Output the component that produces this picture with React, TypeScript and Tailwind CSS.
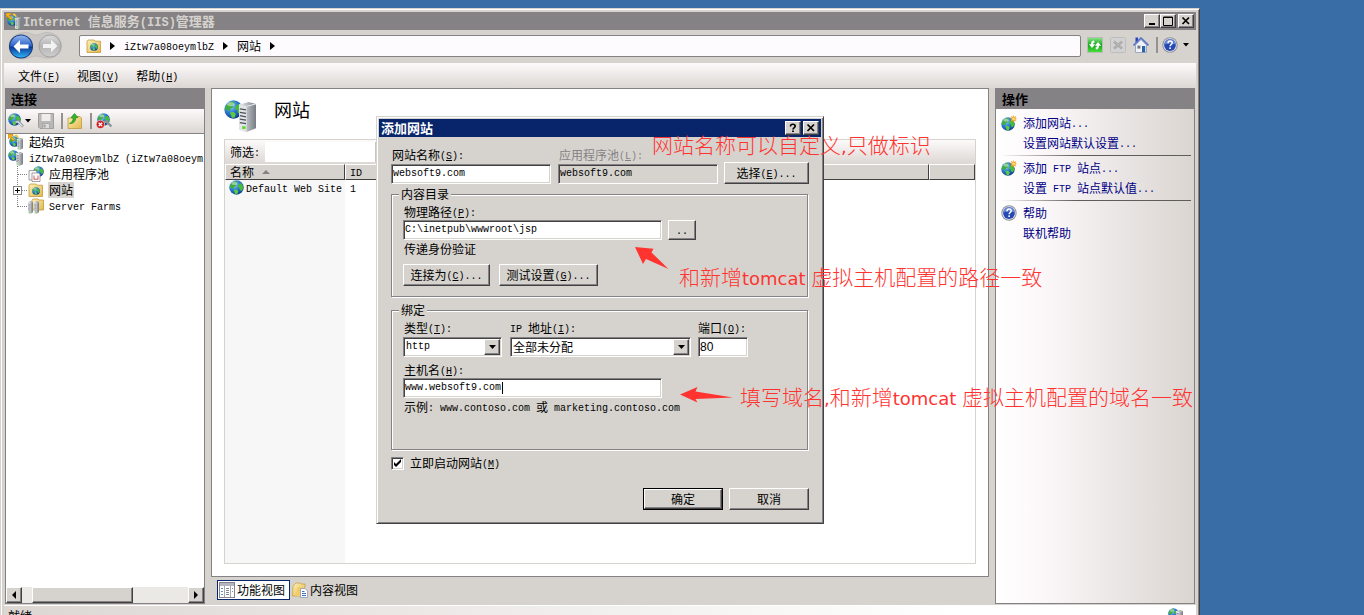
import React from "react";

const RAISED =
  "border border-t-white border-l-white border-r-[#424142] border-b-[#424142] shadow-[inset_-1px_-1px_0_#848284] bg-[#d6d3ce]";
const SUNKEN =
  "border border-t-[#848284] border-l-[#848284] border-r-white border-b-white shadow-[inset_1px_1px_0_#424142,inset_-1px_-1px_0_#d6d3ce]";
const FIELD =
  "h-5 w-full min-w-0 rounded-none pb-[2px] pl-px font-['Liberation_Mono','Noto_Sans_CJK_SC',monospace] text-[10px] leading-4 text-black outline-none";

/* Latin runs are set in a half-width face; "&X" underlines an access key. */
function T({ s, bold }: { s: string; bold?: boolean }) {
  const runs = s.match(/[\x20-\x7e]+|[^\x20-\x7e]+/g) ?? [];
  return (
    <span className="whitespace-pre">
      {runs.map((r, i) => {
        if (!/^[\x20-\x7e]/.test(r)) return <React.Fragment key={i}>{r}</React.Fragment>;
        const m = r.match(/^(.*)&(.)(.*)$/);
        return (
          <span
            key={i}
            className={
              bold
                ? "font-['Liberation_Mono',monospace] text-[12px] leading-none"
                : "align-[1px] font-['Liberation_Mono',monospace] text-[10px] leading-none"
            }
          >
            {m ? (
              <>
                {m[1]}
                <u>{m[2]}</u>
                {m[3]}
              </>
            ) : (
              r
            )}
          </span>
        );
      })}
    </span>
  );
}

function Defs() {
  return (
    <svg width="0" height="0" className="absolute" aria-hidden="true">
      <defs>
        <radialGradient id="sea" cx="0.35" cy="0.3" r="0.8">
          <stop offset="0" stopColor="#9fd4ff" />
          <stop offset="0.45" stopColor="#2f7fd6" />
          <stop offset="1" stopColor="#0b2f86" />
        </radialGradient>
        <linearGradient id="steel" x1="0" x2="1">
          <stop offset="0" stopColor="#f0f1f3" />
          <stop offset="1" stopColor="#777c84" />
        </linearGradient>
        <linearGradient id="manila" x1="0" y1="0" x2="1" y2="1">
          <stop offset="0" stopColor="#fdf0b4" />
          <stop offset="1" stopColor="#e3b84e" />
        </linearGradient>
        <linearGradient id="blueBall" x1="0" y1="0" x2="0" y2="1">
          <stop offset="0" stopColor="#8fb4ee" />
          <stop offset="0.48" stopColor="#2c62c8" />
          <stop offset="0.52" stopColor="#0b3496" />
          <stop offset="1" stopColor="#2fb4f4" />
        </linearGradient>
        <linearGradient id="greyBall" x1="0" y1="0" x2="0" y2="1">
          <stop offset="0" stopColor="#dcdcdc" />
          <stop offset="0.5" stopColor="#b4b4b4" />
          <stop offset="1" stopColor="#cfcfcf" />
        </linearGradient>
        <linearGradient id="green" x1="0" y1="0" x2="0" y2="1">
          <stop offset="0" stopColor="#8fe88a" />
          <stop offset="0.5" stopColor="#12a51a" />
          <stop offset="1" stopColor="#4de23c" />
        </linearGradient>
      </defs>
    </svg>
  );
}

function GlobeShape({ x, y, d }: { x: number; y: number; d: number }) {
  return (
    <svg x={x} y={y} width={d} height={d} viewBox="0 0 16 16">
      <circle cx="8" cy="8" r="7.7" fill="url(#sea)" />
      <path d="M2 4.5C4 1.8 6.5 1 8.2 1.2L9 3 7.4 4.4 7.8 6 5.6 7.2 5 9.4 2.4 8.2 1 9 1 7z" fill="#3fae3a" />
      <path d="M9.6 5.2 12.6 3.2 14.6 5.6 15.4 8.6 13.6 11.6 11.6 11 11.2 8.6 9.2 7.6z" fill="#47bb3c" />
      <path d="M5 10.4 8.2 10 10 12 8.8 15 6.6 15z" fill="#5ccc3f" />
      <ellipse cx="5.8" cy="3.6" rx="3" ry="1.7" fill="#fff" opacity="0.45" />
    </svg>
  );
}

function ServerShape({ x, y, w, h }: { x: number; y: number; w: number; h: number }) {
  return (
    <svg x={x} y={y} width={w} height={h} viewBox="0 0 8 14" preserveAspectRatio="none">
      <path d="M0 1.2 4.6 0 8 0.9V12.2L3.6 14 0 13z" fill="url(#steel)" />
      <path d="M0 1.2 3.6 2V14L0 13z" fill="#e2e4e8" />
      <path d="M3.6 2 8 0.9" stroke="#f6f7f9" strokeWidth="0.4" />
      <path d="M0.4 3.2 3.3 3.7M0.4 4.8 3.3 5.3M0.4 6.4 3.3 6.9M0.4 8 3.3 8.5M0.4 9.6 3.3 10.1" stroke="#4c5159" strokeWidth="0.6" />
      <rect x="1.5" y="11.3" width="1.6" height="1.3" fill="#5fdb2b" />
    </svg>
  );
}

function FolderShape() {
  return (
    <path d="M1 3.5 2 2H8L9 3.2H14.5V14.5H1z" fill="url(#manila)" stroke="#c39a3b" strokeWidth="0.8" />
  );
}

function Svg({ s = 16, children }: { s?: number; children: React.ReactNode }) {
  return (
    <svg width={s} height={s} viewBox={`0 0 ${s} ${s}`} className="shrink-0" aria-hidden="true">
      {children}
    </svg>
  );
}

const IisIcon = () => (
  <Svg>
    <GlobeShape x={1} y={2} d={11} />
    <ServerShape x={9} y={4} w={6} h={12} />
    <path d="M0 0H5V2L3 2.5 7 6 5 7 1.5 3.5 0 5z" fill="#f4ae1d" stroke="#a8690a" strokeWidth="0.4" />
    <path d="M6 1 9 0.6 11 3.5 9.5 4z" fill="#f8c53f" />
  </Svg>
);
const HostIcon = () => (
  <Svg>
    <GlobeShape x={0} y={0} d={11} />
    <ServerShape x={8} y={2} w={7} h={14} />
  </Svg>
);
const PoolsIcon = () => (
  <Svg>
    <GlobeShape x={5} y={0} d={11} />
    <path d="M1 4.5H7.5L9 6V14H1z" fill="#f8f8f8" stroke="#8a8a8a" strokeWidth="0.8" />
    <path d="M4 7H10.5L12 8.5V15.5H4z" fill="#fff" stroke="#8a8a8a" strokeWidth="0.8" />
    <path d="M6 9.5V13.5M10 9.5V13.5M6 13.2H10" stroke="#d04a4a" strokeWidth="0.9" fill="none" />
  </Svg>
);
const SitesIcon = () => (
  <Svg>
    <FolderShape />
    <GlobeShape x={4} y={5} d={8} />
  </Svg>
);
const FarmsIcon = () => (
  <Svg>
    <path d="M4 2.5 5 1H10L11 2H15.5V12H4z" fill="url(#manila)" stroke="#c39a3b" strokeWidth="0.8" />
    <ServerShape x={0} y={3} w={5} h={13} />
    <ServerShape x={6} y={3} w={5} h={13} />
  </Svg>
);
const HelpIcon = () => (
  <Svg>
    <circle cx="8" cy="8" r="7.7" fill="#8f9097" />
    <circle cx="8" cy="8" r="6.7" fill="#e8e9ee" />
    <circle cx="8" cy="8" r="5.9" fill="#2549b4" />
    <path d="M2.4 7.5a5.6 5.6 0 0 1 11.2 0C10 6.2 6 6.2 2.4 7.5z" fill="#7a9ae2" opacity="0.75" />
    <path d="M6 6.2C6 4.6 7 4.1 8.1 4.1S10.2 4.8 10.2 6C10.2 7.5 8.1 7.6 8.1 9.3" fill="none" stroke="#fff" strokeWidth="1.5" />
    <rect x="7.3" y="10.4" width="1.6" height="1.6" fill="#fff" />
  </Svg>
);
const AddSiteIcon = () => (
  <Svg>
    <GlobeShape x={0} y={2} d={14} />
    <path
      d="M12.5 0 13.2 1.9 15.2 1.1 14.4 3.1 16 3.8 14.3 4.6 15.1 6.5 13.2 5.7 12.5 7.4 11.7 5.7 9.8 6.5 10.6 4.6 9 3.8 10.6 3.1 9.8 1.1 11.8 1.9z"
      fill="#f6a51c"
    />
    <circle cx="12.5" cy="3.7" r="1.3" fill="#ffe27a" />
  </Svg>
);
const ConnectIcon = () => (
  <Svg>
    <GlobeShape x={0} y={0} d={13} />
    <path d="M7 9 10 8.4 15 13.5" fill="none" stroke="#8d939b" strokeWidth="2.6" />
    <path d="M7.6 9 10 8.8 14.5 13.2" fill="none" stroke="#e3e6ea" strokeWidth="1.2" />
  </Svg>
);
const DisconnectIcon = () => (
  <Svg>
    <GlobeShape x={1} y={0} d={13} />
    <path d="M8 9 10.5 8.6 15.4 13.5" fill="none" stroke="#8d939b" strokeWidth="2.4" />
    <circle cx="4.4" cy="11.4" r="4.2" fill="#cf2222" stroke="#fff" strokeWidth="0.5" />
    <path d="M2.7 9.7 6.1 13.1M6.1 9.7 2.7 13.1" stroke="#fff" strokeWidth="1.3" />
  </Svg>
);
const SaveIcon = () => (
  <Svg>
    <path d="M0.5 0.5H15.5V15.5H2L0.5 14z" fill="#bab7b7" stroke="#a09d9e" />
    <rect x="3.5" y="1" width="9" height="7" fill="#efecec" />
    <rect x="4.5" y="10.5" width="7" height="5" fill="#dedbdb" stroke="#a09d9e" strokeWidth="0.7" />
    <rect x="5.5" y="11.5" width="2" height="3" fill="#a09d9e" />
  </Svg>
);
const UpFolderIcon = () => (
  <Svg>
    <path d="M1 5H9L10 3.5H13L14.5 5V15.5H1z" fill="url(#manila)" stroke="#c39a3b" strokeWidth="0.8" />
    <path d="M2.5 10.5C5 9.5 6.2 7.4 6.1 4.6H4L7.5 0.5 11 4.6H8.8C8.8 8.2 6.6 11 2.5 10.5z" fill="#35b52c" stroke="#1b7f1b" strokeWidth="0.6" />
  </Svg>
);
const RefreshIcon = () => (
  <Svg>
    <rect x="0.5" y="0.5" width="15" height="15" fill="url(#green)" stroke="#b6bfb4" />
    <path d="M7 3.4C4.8 3.6 4 5 4 7.2H1.8L5 11 8.2 7.2H6.2C6.2 6 6.4 5.6 7.6 5.4z" fill="#fff" />
    <path d="M9 12.6C11.2 12.4 12 11 12 8.8H14.2L11 5 7.8 8.8H9.8C9.8 10 9.6 10.4 8.4 10.6z" fill="#fff" />
  </Svg>
);
const StopIcon = () => (
  <Svg>
    <rect x="0.5" y="0.5" width="15" height="15" rx="1" fill="#d3d2d2" stroke="#bdbcbc" />
    <path d="M4 4.5 12 11.5M12 4.5 4 11.5" stroke="#a5a5a5" strokeWidth="2.4" />
    <path d="M4.3 4.2 11.7 11M11.7 4.2 4.3 11" stroke="#c4c4c4" strokeWidth="0.8" />
  </Svg>
);
const HomeIcon = () => (
  <Svg>
    <rect x="2.5" y="0.5" width="2.6" height="5" fill="#2b45b4" />
    <path d="M2.5 8 8 2.6 13.5 8V15.5H2.5z" fill="#eff2f8" stroke="#8d9bb8" strokeWidth="0.8" />
    <path d="M0.5 8.4 8 1 15.5 8.4" fill="none" stroke="#5675c8" strokeWidth="1.6" />
    <rect x="9" y="9" width="3.2" height="6.2" fill="#2b62a8" />
    <rect x="4.4" y="8.6" width="3" height="3" fill="#6f7884" />
  </Svg>
);
const FeatureViewIcon = () => (
  <Svg>
    <rect x="0.5" y="0.5" width="15" height="15" fill="#fff" stroke="#84828c" />
    <rect x="1" y="1" width="14" height="3" fill="#b7b5c2" />
    <path d="M5.5 4V15M11.5 4V15" stroke="#a7a5ae" />
    <path d="M2 6.5H4M2 9.5H4M2 12.5H4" stroke="#6d86c8" />
    <path d="M7 6.5H10M7 8.5H10M7 10.5H10M7 12.5H10M13 6.5H14M13 9.5H14" stroke="#8a8893" />
  </Svg>
);
const ContentViewIcon = () => (
  <Svg>
    <path d="M1 4 4 1H8L9 2H13V5L10 14H0.5z" fill="url(#manila)" stroke="#c39a3b" strokeWidth="0.7" />
    <path d="M3 14 6 5H9V14z" fill="#f0cd68" />
    <path d="M8.5 6.5H13L15.5 9V15.5H8.5z" fill="#fff" stroke="#8b97b4" strokeWidth="0.8" />
    <path d="M10 9.5H12.5M10 11.5H14M10 13.5H14" stroke="#3f6fc0" />
  </Svg>
);

const Caret = () => (
  <svg width="6" height="4" viewBox="0 0 6 4" className="shrink-0" aria-hidden="true">
    <path d="M0 0H6L3 3.5z" fill="#000" />
  </svg>
);
const Crumb = () => (
  <svg width="5" height="8" viewBox="0 0 5 8" className="shrink-0" aria-hidden="true">
    <path d="M0 0 5 4 0 8z" fill="#000" />
  </svg>
);
const Divider = () => <span className="h-4 w-[2px] shrink-0 bg-[#94918f]" />;

function CaptionButton({ label, children }: { label: string; children: React.ReactNode }) {
  return (
    <button aria-label={label} className={`flex h-[14px] w-4 items-center justify-center ${RAISED}`}>
      <svg width="12" height="10" viewBox="0 0 12 10" aria-hidden="true">
        {children}
      </svg>
    </button>
  );
}
const CloseGlyph = () => <path d="M2.5 1.5 9 8M9 1.5 2.5 8" stroke="#000" strokeWidth="1.7" />;

function TreeRow({
  icon,
  text,
  level,
  selected,
  expander,
}: {
  icon: React.ReactNode;
  text: string;
  level: number;
  selected?: boolean;
  expander?: boolean;
}) {
  return (
    <li className={`flex h-4 items-center ${level ? "pl-[6px]" : "pl-[2px]"}`}>
      {level > 0 && (
        <span className="flex w-4 shrink-0 items-center">
          {expander ? (
            <svg width="16" height="16" viewBox="0 0 16 16" aria-hidden="true">
              <path d="M5.5 0V16M10 8.5H16" stroke="#848284" strokeDasharray="1 1" />
              <rect x="1.5" y="4.5" width="8" height="8" fill="#fff" stroke="#848284" />
              <path d="M3 8.5H8M5.5 6V11" stroke="#000" />
            </svg>
          ) : (
            <svg width="16" height="16" viewBox="0 0 16 16" aria-hidden="true">
              <path d={text === "Server Farms" ? "M5.5 0V9M6 8.5H16" : "M5.5 0V16M6 8.5H16"} stroke="#848284" strokeDasharray="1 1" fill="none" />
            </svg>
          )}
        </span>
      )}
      {icon}
      <span className={`ml-1 px-px leading-4 ${selected ? "bg-[#d6d3ce]" : ""}`}>
        <T s={text} />
      </span>
    </li>
  );
}

function Connections() {
  return (
    <section className="flex w-[200px] shrink-0 flex-col border border-[#848284] bg-white">
      <h2 className="h-5 shrink-0 bg-[#848284] pl-[5px] text-[13px] leading-5 font-bold">连接</h2>
      <div className="flex h-[25px] shrink-0 items-center border-b border-[#848284] bg-linear-to-b from-[#fdfafb] to-[#dcd7d3] pl-[2px]">
        <button aria-label="连接到" className="flex items-center gap-px">
          <ConnectIcon />
          <Caret />
        </button>
        <button aria-label="保存" className="ml-[7px]">
          <SaveIcon />
        </button>
        <span className="ml-[7px] flex items-center gap-1">
          <Divider />
          <button aria-label="向上">
            <UpFolderIcon />
          </button>
        </span>
        <span className="ml-[7px] flex items-center gap-1">
          <Divider />
          <button aria-label="断开">
            <DisconnectIcon />
          </button>
        </span>
      </div>
      <ul className="flex-1 overflow-hidden">
        <TreeRow level={0} icon={<IisIcon />} text="起始页" />
        <TreeRow level={0} icon={<HostIcon />} text="iZtw7a08oeymlbZ (iZtw7a08oeym" />
        <TreeRow level={1} icon={<PoolsIcon />} text="应用程序池" />
        <TreeRow level={1} icon={<SitesIcon />} text="网站" selected expander />
        <TreeRow level={1} icon={<FarmsIcon />} text="Server Farms" />
      </ul>
      <div className="flex h-4 shrink-0 bg-[#ebe9e6]">
        <button aria-label="向左滚动" className={`flex w-4 items-center justify-center ${RAISED}`}>
          <svg width="4" height="8" viewBox="0 0 4 8" aria-hidden="true">
            <path d="M4 0V8L0 4z" />
          </svg>
        </button>
        <div className="flex flex-1 pl-[10px]">
          <div className={`w-[101px] ${RAISED}`} />
        </div>
        <button aria-label="向右滚动" className={`flex w-4 items-center justify-center ${RAISED}`}>
          <svg width="4" height="8" viewBox="0 0 4 8" aria-hidden="true">
            <path d="M0 0V8L4 4z" />
          </svg>
        </button>
      </div>
    </section>
  );
}

function Sites() {
  const th =
    "border border-t-white border-l-white border-r-[#424142] border-b-[#424142] bg-[#d6d3ce] p-0 text-left font-normal";
  return (
    <section className="flex min-w-0 flex-1 flex-col">
      <div className="flex flex-1 flex-col border border-[#848284] bg-white px-3 pt-[10px] pb-3">
        <div className="flex h-10 shrink-0 gap-4">
          <svg width="34" height="34" viewBox="0 0 34 34" aria-hidden="true">
            <GlobeShape x={0} y={1} d={19} />
            <ServerShape x={15} y={3} w={17} h={30} />
          </svg>
          <h1 className="text-[18px] leading-5">网站</h1>
        </div>
        <div className="flex flex-1 flex-col border border-[#d6d3ce]">
          <div className="flex h-6 shrink-0 items-stretch bg-linear-to-b from-[#fdfafb] to-[#dcd7d3]">
            <label htmlFor="filter" className="w-10 pl-[5px] leading-6">
              <T s="筛选:" />
            </label>
            <input id="filter" className="my-[2px] w-[111px] border-r border-[#c8c5c0] bg-white px-1 outline-none" />
          </div>
          <div className="flex flex-1 flex-col bg-linear-to-r from-[#f7f7f7] from-[120px] to-white to-[120px]">
            <table className="w-full table-fixed border-separate border-spacing-0 leading-[14px]">
              <thead>
                <tr>
                  <th className={`w-[120px] ${th}`}>
                    <span className="flex items-center gap-2 pl-1">
                      名称
                      <svg width="8" height="4" viewBox="0 0 8 4" aria-hidden="true">
                        <path d="M0 4 4 0 8 4z" fill="#848284" />
                      </svg>
                    </span>
                  </th>
                  <th className={`w-[40px] ${th}`}>
                    <span className="block pl-1">
                      <T s="ID" />
                    </span>
                  </th>
                  <th className={th} aria-label="状态" />
                  <th className={`w-[46px] ${th}`} aria-label="绑定" />
                </tr>
              </thead>
              <tbody>
                <tr>
                  <td className="p-0">
                    <span className="flex h-4 items-center gap-px pl-1">
                      <Svg>
                        <GlobeShape x={0} y={0} d={15} />
                      </Svg>
                      <T s="Default Web Site" />
                    </span>
                  </td>
                  <td className="p-0">
                    <span className="flex h-4 items-center pl-[5px]">
                      <T s="1" />
                    </span>
                  </td>
                  <td className="p-0" />
                  <td className="p-0" />
                </tr>
              </tbody>
            </table>
          </div>
        </div>
      </div>
      <div className="flex h-[27px] shrink-0 items-start gap-[2px] pt-[3px] pl-[6px]">
        <button className="flex h-5 items-center gap-[2px] border border-[#08246b] bg-white px-px pr-1">
          <FeatureViewIcon />
          功能视图
        </button>
        <button className="flex h-5 items-center gap-[2px]">
          <ContentViewIcon />
          内容视图
        </button>
      </div>
    </section>
  );
}

function ActionGroup({ icon, items }: { icon: React.ReactNode; items: string[] }) {
  return (
    <div>
      {items.map((it, i) => (
        <div key={it} className="flex h-5 items-center gap-[6px] pl-[5px]">
          <span className="w-4 shrink-0">{i === 0 && icon}</span>
          <a href="#action" className="text-[#000084]">
            <T s={it} />
          </a>
        </div>
      ))}
    </div>
  );
}
const Rule = () => <div className="my-[2px] ml-1 mr-[3px] h-px bg-linear-to-r from-transparent to-[#5f5d5c] to-40%" />;

function Actions() {
  return (
    <section className="w-[200px] shrink-0 border border-[#848284] bg-linear-to-r from-white via-[#fbf7f9] via-25% to-[#dad5d0]">
      <h2 className="h-5 bg-[#848284] pl-[6px] text-[13px] leading-5 font-bold">操作</h2>
      <div className="pt-1">
        <ActionGroup icon={<AddSiteIcon />} items={["添加网站...", "设置网站默认设置..."]} />
        <Rule />
        <ActionGroup icon={<AddSiteIcon />} items={["添加 FTP 站点...", "设置 FTP 站点默认值..."]} />
        <Rule />
        <ActionGroup icon={<HelpIcon />} items={["帮助", "联机帮助"]} />
      </div>
    </section>
  );
}

function Btn({ text, cls }: { text: string; cls: string }) {
  return (
    <button className={`h-[22px] leading-4 ${cls} ${RAISED}`}>
      <T s={text} />
    </button>
  );
}

function Drop({ id, value, cls }: { id: string; value: string; cls: string }) {
  return (
    <div className="relative flex">
      <select
        id={id}
        defaultValue={value}
        className={`h-5 w-full appearance-none rounded-none bg-white pl-[2px] leading-4 text-black outline-none ${cls} ${SUNKEN}`}
      >
        <option>{value}</option>
      </select>
      <span className={`pointer-events-none absolute top-[2px] right-[2px] flex h-4 w-4 items-center justify-center ${RAISED}`}>
        <svg width="7" height="4" viewBox="0 0 7 4" aria-hidden="true">
          <path d="M0 0H7L3.5 4z" />
        </svg>
      </span>
    </div>
  );
}

const GROUP = "mr-px border border-[#848284] px-[11px] shadow-[1px_1px_0_#fff,inset_1px_1px_0_#fff]";
const LEGEND = "relative ml-[-4px] bg-[#d6d3ce] px-[2px] leading-3";

function Dialog() {
  return (
    <div
      role="dialog"
      aria-label="添加网站"
      className="absolute top-[116px] left-[376px] w-[448px] border border-t-[#d6d3ce] border-l-[#d6d3ce] border-r-[#424142] border-b-[#424142] bg-[#d6d3ce] p-[2px] shadow-[inset_1px_1px_0_#fff,inset_-1px_-1px_0_#848284]"
    >
      <div className="flex h-[18px] items-center justify-between bg-[#08246b] px-[2px]">
        <span className="text-[13px] leading-4 font-bold text-white">添加网站</span>
        <span className="flex gap-[2px]">
          <CaptionButton label="帮助">
            <path d="M3.5 3.4C3.5 1.6 4.6 1.2 5.8 1.2S8.2 1.8 8.2 3.2 6 4.6 6 6.6" fill="none" stroke="#000" strokeWidth="1.6" />
            <rect x="5.1" y="7.5" width="1.8" height="1.5" />
          </CaptionButton>
          <CaptionButton label="关闭">
            <CloseGlyph />
          </CaptionButton>
        </span>
      </div>
      <form className="px-3 pt-[11px] pb-[11px]" onSubmit={(e) => e.preventDefault()}>
        <div className="flex items-end">
          <div className="mr-[7px] flex flex-1 flex-col gap-[2px]">
            <label htmlFor="site" className="pl-px leading-[14px]">
              <T s="网站名称(&S):" />
            </label>
            <input id="site" defaultValue="websoft9.com" className={`bg-white ${FIELD} ${SUNKEN}`} />
          </div>
          <div className="mr-[6px] flex flex-1 flex-col gap-[2px]">
            <label htmlFor="pool" className="pl-px leading-[14px] text-[#848284]">
              <T s="应用程序池(&L):" />
            </label>
            <input id="pool" readOnly defaultValue="websoft9.com" className={`bg-[#d6d3ce] ${FIELD} ${SUNKEN}`} />
          </div>
          <Btn text="选择(&E)..." cls="w-[85px]" />
        </div>

        <fieldset className={`mt-1 pb-[10px] ${GROUP}`}>
          <legend className={LEGEND}>内容目录</legend>
          <label htmlFor="path" className="block pt-[5px] pl-px leading-[14px]">
            <T s="物理路径(&P):" />
          </label>
          <div className="mt-px flex items-end gap-[6px]">
            <div className="flex w-[259px]">
              <input id="path" defaultValue="C:\inetpub\wwwroot\jsp" className={`bg-white ${FIELD} ${SUNKEN}`} />
            </div>
            <button aria-label="浏览" className={`h-5 w-7 leading-4 ${RAISED}`}>
              <T s=".." />
            </button>
          </div>
          <p className="mt-[2px] pl-px leading-[14px]">传递身份验证</p>
          <div className="mt-2 flex gap-[9px]">
            <Btn text="连接为(&C)..." cls="w-[87px]" />
            <Btn text="测试设置(&G)..." cls="w-[99px]" />
          </div>
        </fieldset>

        <fieldset className={`mt-[7px] pb-[35px] ${GROUP}`}>
          <legend className={LEGEND}>绑定</legend>
          <div className="flex pt-[5px]">
            <div className="mr-2 flex w-[99px] flex-col gap-[2px]">
              <label htmlFor="type" className="pl-px leading-[14px]">
                <T s="类型(&T):" />
              </label>
              <Drop id="type" value="http" cls="font-['Liberation_Mono',monospace] text-[10px]" />
            </div>
            <div className="mr-[7px] flex w-[181px] flex-col gap-[2px]">
              <label htmlFor="ip" className="leading-[14px]">
                <T s="IP 地址(&I):" />
              </label>
              <Drop id="ip" value="全部未分配" cls="text-[12px]" />
            </div>
            <div className="flex w-[50px] flex-col gap-[2px]">
              <label htmlFor="port" className="leading-[14px]">
                <T s="端口(&O):" />
              </label>
              <input
                id="port"
                defaultValue="80"
                className={`h-5 w-full bg-white pl-px font-['Liberation_Sans',sans-serif] text-[12px] leading-4 outline-none ${SUNKEN}`}
              />
            </div>
          </div>
          <label htmlFor="host" className="mt-[6px] block pl-px leading-[14px]">
            <T s="主机名(&H):" />
          </label>
          <div className="mt-px grid w-[259px]">
            <input id="host" defaultValue="www.websoft9.com" className={`col-start-1 row-start-1 bg-white ${FIELD} ${SUNKEN}`} />
            <span className="pointer-events-none col-start-1 row-start-1 ml-[99px] h-3 w-px self-center bg-black" />
          </div>
          <p className="mt-[2px] pl-px leading-[14px]">
            <T s="示例: www.contoso.com 或 marketing.contoso.com" />
          </p>
        </fieldset>

        <label className="mt-[6px] flex h-[14px] items-center gap-[6px]">
          <span className="grid h-[13px] w-[13px]">
            <input
              type="checkbox"
              defaultChecked
              className={`peer col-start-1 row-start-1 h-[13px] w-[13px] appearance-none bg-white ${SUNKEN}`}
            />
            <svg
              width="13"
              height="13"
              viewBox="0 0 13 13"
              className="pointer-events-none invisible col-start-1 row-start-1 peer-checked:visible"
              aria-hidden="true"
            >
              <path d="M3 5V8L5 10 10 5V2L5 7z" />
            </svg>
          </span>
          <T s="立即启动网站(&M)" />
        </label>

        <div className="mt-[18px] flex justify-end gap-[6px]">
          <button className="h-[22px] w-20 border border-black">
            <span className={`flex h-full items-center justify-center ${RAISED}`}>确定</span>
          </button>
          <Btn text="取消" cls="w-20" />
        </div>
      </form>
    </div>
  );
}

const NOTE = "absolute whitespace-pre text-[21px] leading-6 font-light text-[#ff3431]";
const L = ({ children }: { children: string }) => (
  <span className="font-['DejaVu_Sans',sans-serif] text-[18px] leading-none font-normal">{children}</span>
);

export default function App() {
  return (
    <div className="relative h-screen overflow-hidden bg-[#396da5] pt-2 pr-[164px] font-['Noto_Sans_CJK_SC',sans-serif] text-[12px] text-black">
      <Defs />
      <div className="flex h-[calc(100%+11px)] flex-col border border-t-[#d6d3ce] border-r-[#424142] border-b-0 border-l-[#d6d3ce] bg-[#d6d3ce] px-[3px] pt-[3px] shadow-[inset_1px_1px_0_#fff,inset_-1px_0_0_#848284]">
        <header className="flex h-[18px] shrink-0 items-center justify-between bg-[#848284] pr-[2px] pl-[2px]">
          <div className="flex items-center gap-px text-[13px] leading-[18px] font-bold text-[#d6d3ce]">
            <IisIcon />
            <T bold s="Internet 信息服务(IIS)管理器" />
          </div>
          <div className="flex">
            <CaptionButton label="最小化">
              <rect x="3" y="7" width="6" height="2" />
            </CaptionButton>
            <CaptionButton label="最大化">
              <path d="M1.5 1H10.5V9.5H1.5zM1 1.5H11" fill="none" stroke="#000" />
            </CaptionButton>
            <span className="ml-[2px] flex">
              <CaptionButton label="关闭">
                <CloseGlyph />
              </CaptionButton>
            </span>
          </div>
        </header>

        <div className="flex h-[33px] shrink-0 items-center pb-[2px] pl-[3px]">
          <svg width="58" height="30" viewBox="0 0 58 30" role="img" aria-label="后退和前进">
            <path d="M14 2C22 0 24 4 29 4S37 0 44 2C58 5 58 26 43 27 37 28 34 25 29 25S20 29 14 28C-2 25-2 5 14 2z" fill="#c9c6c3" stroke="#b5b2af" strokeWidth="0.6" />
            <circle cx="14" cy="15.5" r="12" fill="#173a7c" />
            <circle cx="14" cy="15.5" r="11" fill="url(#blueBall)" />
            <path d="M6.5 15.5 13 9V13.5H21.5V17.5H13V22z" fill="#fff" />
            <circle cx="43" cy="15" r="11" fill="url(#greyBall)" stroke="#a4a4a4" />
            <path d="M50.5 15 44 8.8V13H36V17H44V21.2z" fill="#f2f2f2" />
          </svg>
          <nav className="ml-[14px] flex h-[22px] flex-1 items-center rounded-[2px] border border-[#848284] bg-[#fdfbfd] pl-[6px]">
            <SitesIcon />
            <span className="ml-2 flex items-center gap-[9px]">
              <Crumb />
              <T s="iZtw7a08oeymlbZ" />
              <Crumb />
              <span>网站</span>
              <Crumb />
            </span>
          </nav>
          <div className="ml-[6px] flex h-[18px] items-start gap-[7px]">
            <button aria-label="刷新">
              <RefreshIcon />
            </button>
            <button aria-label="停止">
              <StopIcon />
            </button>
            <button aria-label="主页">
              <HomeIcon />
            </button>
          </div>
          <div className="mr-[7px] ml-[7px] flex h-[18px] items-start gap-1">
            <Divider />
            <button aria-label="帮助" className="flex items-center gap-[5px]">
              <HelpIcon />
              <Caret />
            </button>
          </div>
        </div>

        <nav className="flex h-[25px] shrink-0 items-center gap-[17px] bg-linear-to-b from-[#fdfafb] to-[#dcd7d3] pl-[14px]">
          <button>
            <T s="文件(&F)" />
          </button>
          <button>
            <T s="视图(&V)" />
          </button>
          <button>
            <T s="帮助(&H)" />
          </button>
        </nav>

        <main className="flex min-h-0 flex-1 gap-[6px] px-px">
          <Connections />
          <Sites />
          <Actions />
        </main>

        <footer className="mt-px flex h-[21px] shrink-0 items-center justify-between border-t border-white bg-linear-to-r from-[#dcd7d3] to-white to-80% pr-3 pl-1">
          <span>就绪</span>
          <HostIcon />
        </footer>
      </div>

      <Dialog />

      <p className={`top-[132px] left-[652px] ${NOTE}`}>
        网站名称可以自定义<L>,</L>只做标识
      </p>
      <p className={`top-[264px] left-[679px] ${NOTE}`}>
        和新增<L>{"tomcat "}</L>虚拟主机配置的路径一致
      </p>
      <p className={`top-[384px] left-[740px] ${NOTE}`}>
        填写域名<L>,</L>和新增<L>{"tomcat "}</L>虚拟主机配置的域名一致
      </p>
      <svg width="34" height="23" viewBox="0 0 34 23" className="absolute top-[247px] left-[635px]" aria-hidden="true">
        <path d="M0 0 18.5 1.7 16.5 5.5 33.5 22 11 12 8 17z" fill="#ff3431" />
      </svg>
      <svg width="54" height="16" viewBox="0 0 54 16" className="absolute top-[387px] left-[680px]" aria-hidden="true">
        <path d="M0 7.5 17.5 0 15.5 4.5 53 10.4 15.5 12 17.5 15.5z" fill="#ff3431" />
      </svg>
    </div>
  );
}
